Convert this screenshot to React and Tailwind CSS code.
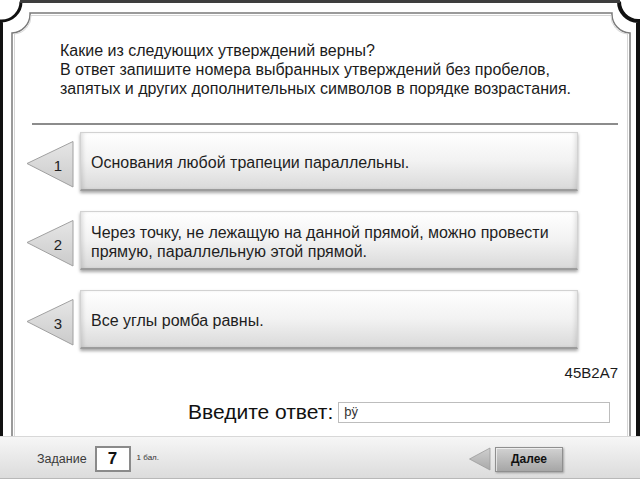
const FONT = "font-['Liberation_Sans',Arial,sans-serif]";

const options = [
  { n: 1, text: 'Основания любой трапеции параллельны.' },
  { n: 2, text: 'Через точку, не лежащую на данной прямой, можно провести прямую, параллельную этой прямой.' },
  { n: 3, text: 'Все углы ромба равны.' },
];

function Frame() {
  // decorative border with notched corners
  return (
    <svg className="absolute inset-0 pointer-events-none" width="640" height="436" viewBox="0 0 640 436">
      <path d="M1.5 436 V21 A19.5 19.5 0 0 0 21 1.5" fill="none" stroke="#111" strokeWidth="3" />
      <path d="M619 1.5 A19.5 19.5 0 0 0 638 21 V436" fill="none" stroke="#111" strokeWidth="4" />
      <path d="M20 1.5 H620" fill="none" stroke="#3e3e3e" strokeWidth="3" />
      <path d="M12 436 V33 A19 19 0 0 0 30 13 H612 A19 19 0 0 0 630 33 V436" fill="none" stroke="#7a7a7a" strokeWidth="1.5" />
      <path d="M14.5 436 V34 A18 18 0 0 0 31 15.5 H611 A18 18 0 0 0 627.5 34 V436" fill="none" stroke="#d6d6d6" strokeWidth="1" />
    </svg>
  );
}

function Marker({ n }) {
  return (
    <svg width="48" height="48" viewBox="0 0 48 48" className="shrink-0">
      <defs>
        <linearGradient id={`tri${n}`} x1="0" y1="0" x2="0" y2="1">
          <stop offset="0" stopColor="#e6e6e6" />
          <stop offset="1" stopColor="#cbcbcb" />
        </linearGradient>
      </defs>
      <polygon points="1,22.5 47,0.5 47,46" fill={`url(#tri${n})`} stroke="#a0a0a0" strokeWidth="1" />
      <text x="32" y="30" textAnchor="middle" fontSize="15" fill="#222" fontFamily="Liberation Sans, Arial, sans-serif">
        {n}
      </text>
    </svg>
  );
}

function Option({ n, text }) {
  return (
    <div className="flex items-center pl-[26px]">
      <div className="mt-[7px]">
        <Marker n={n} />
      </div>
      <div className="ml-[6px] w-[498px] h-[59px] flex items-center pt-[3px] pl-[10px] pr-[14px] border border-[#d2d2d2] border-b-[#9c9c9c] border-b-2 bg-linear-to-b from-white via-[#f2f2f2] to-[#dadada] shadow-[inset_4px_0_4px_-2px_rgba(0,0,0,0.12),inset_-4px_0_4px_-2px_rgba(0,0,0,0.1),0_2px_3px_rgba(0,0,0,0.35)]">
        <p className="text-[16px] leading-[19px] text-[#1e1e1e]">{text}</p>
      </div>
    </div>
  );
}

export default function App() {
  return (
    <div className={`w-[640px] h-[480px] bg-white flex flex-col overflow-hidden ${FONT}`}>
      <div className="relative h-[435px] flex flex-col">
        <Frame />

        <div className="pt-[41px] pl-[60px] text-[16px] leading-[19px] text-[#1b1b1b]">
          <p>Какие из следующих утверждений верны?</p>
          <p>В ответ запишите номера выбранных утверждений без пробелов,</p>
          <p>запятых и других дополнительных символов в порядке возрастания.</p>
        </div>

        <div className="mt-[25px] ml-[32px] w-[586px] h-[2px] bg-[#8c8c8c]" />

        <div className="mt-[7px] flex flex-col gap-[20px]">
          {options.map(o => (
            <Option key={o.n} {...o} />
          ))}
        </div>

        <div className="mt-[15px] pr-[22px] text-right text-[15px] leading-[18px] text-[#1b1b1b]">45B2A7</div>

        <div className="mt-[18px] flex items-center pl-[188px]">
          <span className="text-[21px] leading-[24px] text-[#111]">Введите ответ:</span>
          <div className="ml-[5px] w-[272px] h-[21px] border border-[#bdbdbd] bg-white flex items-center pl-[5px] text-[13px] text-[#333]">
            þÿ
          </div>
        </div>
      </div>

      <div className="h-[43px] mt-[1px] flex items-center border-t border-[#d8d8d8] border-b border-b-[#b8b8b8] bg-linear-to-b from-[#f6f6f6] to-[#dcdcdc]">
        <span className="ml-[37px] text-[12.5px] text-[#3a3a3a] mt-[3px]">Задание</span>
        <div className="ml-[8px] mt-[3px] w-[36px] h-[26px] border-2 border-[#8a8a8a] bg-white flex items-center justify-center text-[17px] font-bold text-[#111]">
          7
        </div>
        <span className="ml-[6px] text-[8px] text-[#333]">1 бал.</span>

        <div className="ml-auto mr-[77px] mt-[3px] flex items-center">
          <svg width="22" height="24" viewBox="0 0 22 24">
            <defs>
              <linearGradient id="arr" x1="0" y1="0" x2="0" y2="1">
                <stop offset="0" stopColor="#cfcfcf" />
                <stop offset="1" stopColor="#a9a9a9" />
              </linearGradient>
            </defs>
            <polygon points="0.5,12 21,1 21,23" fill="url(#arr)" stroke="#9c9c9c" strokeWidth="0.8" />
          </svg>
          <button className="ml-[4px] w-[68px] h-[25px] border border-[#8f8f8f] bg-linear-to-b from-[#d2d2d2] to-[#a6a6a6] shadow-[inset_1px_1px_0_rgba(255,255,255,0.6),1px_1px_2px_rgba(0,0,0,0.3)] text-[12px] font-bold text-[#111]">
            Далее
          </button>
        </div>
      </div>
    </div>
  );
}
